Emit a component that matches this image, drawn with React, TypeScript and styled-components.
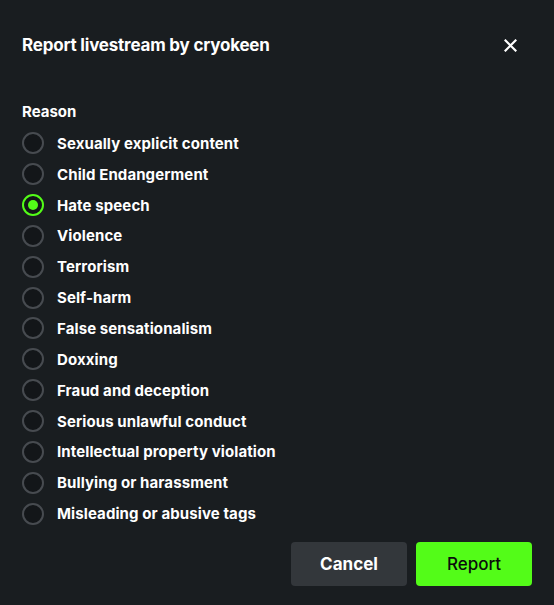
import { useState } from "react";
import styled, { createGlobalStyle } from "styled-components";

const GlobalStyle = createGlobalStyle`
    html, body {
        margin: 0;
        padding: 0;
        background: #191d20;
    }
    body {
        font-family: Inter, "Noto Sans", sans-serif;
        color: #ffffff;
    }
`;

const Dialog = styled.div`
    width: 554px;
    height: 605px;
    box-sizing: border-box;
    background: #191d20;
    padding: 32px 22px 19px 22px;
    display: flex;
    flex-direction: column;
`;

const Header = styled.div`
    display: flex;
    justify-content: space-between;
    align-items: center;
    height: 26px;
`;

const Title = styled.h2`
    margin: 0;
    font-size: 17px;
    font-weight: 700;
    letter-spacing: -0.2px;
`;

const CloseButton = styled.button`
    width: 26px;
    height: 26px;
    margin-right: 9px;
    padding: 0;
    border: none;
    background: transparent;
    display: flex;
    align-items: center;
    justify-content: center;
    cursor: pointer;
`;

const Label = styled.div`
    margin-top: 44px;
    font-size: 15px;
    font-weight: 700;
    height: 20px;
    line-height: 20px;
`;

const List = styled.div`
    margin-top: 6px;
    display: flex;
    flex-direction: column;
`;

const Option = styled.label`
    display: flex;
    align-items: center;
    gap: 13px;
    height: 30.85px;
    cursor: pointer;
    font-size: 15px;
    font-weight: 700;
    letter-spacing: 0.1px;
`;

const Radio = styled.span<{ $checked: boolean }>`
    width: 22px;
    height: 22px;
    box-sizing: border-box;
    border-radius: 50%;
    border: 2px solid ${({ $checked }) => ($checked ? "#53fc18" : "#474b50")};
    background: #131619;
    display: flex;
    align-items: center;
    justify-content: center;

    &::after {
        content: "";
        width: 10px;
        height: 10px;
        border-radius: 50%;
        background: #53fc18;
        display: ${({ $checked }) => ($checked ? "block" : "none")};
    }
`;

const Footer = styled.div`
    margin-top: auto;
    display: flex;
    justify-content: flex-end;
    gap: 9px;
`;

const Button = styled.button<{ $primary?: boolean }>`
    width: 116px;
    height: 44px;
    border: none;
    border-radius: 4px;
    font-family: Inter, "Noto Sans", sans-serif;
    font-size: 17px;
    font-weight: ${({ $primary }) => ($primary ? 500 : 700)};
    background: ${({ $primary }) => ($primary ? "#53fc18" : "#33373b")};
    color: ${({ $primary }) => ($primary ? "#0b0d0c" : "#ffffff")};
    cursor: pointer;
`;

const reasons = [
    "Sexually explicit content",
    "Child Endangerment",
    "Hate speech",
    "Violence",
    "Terrorism",
    "Self-harm",
    "False sensationalism",
    "Doxxing",
    "Fraud and deception",
    "Serious unlawful conduct",
    "Intellectual property violation",
    "Bullying or harassment",
    "Misleading or abusive tags",
];

export default function App() {
    const [selected, setSelected] = useState("Hate speech");

    return (
        <>
            <GlobalStyle />
            <Dialog>
                <Header>
                    <Title>Report livestream by cryokeen</Title>
                    <CloseButton aria-label="Close">
                        <svg width="13" height="13" viewBox="0 0 13 13">
                            <path d="M1.5 1.5 L11.5 11.5 M11.5 1.5 L1.5 11.5" stroke="#fff" strokeWidth="2.2" strokeLinecap="square" />
                        </svg>
                    </CloseButton>
                </Header>
                <Label>Reason</Label>
                <List>
                    {reasons.map((r) => (
                        <Option key={r} onClick={() => setSelected(r)}>
                            <Radio $checked={selected === r} />
                            {r}
                        </Option>
                    ))}
                </List>
                <Footer>
                    <Button>Cancel</Button>
                    <Button $primary>Report</Button>
                </Footer>
            </Dialog>
        </>
    );
}
